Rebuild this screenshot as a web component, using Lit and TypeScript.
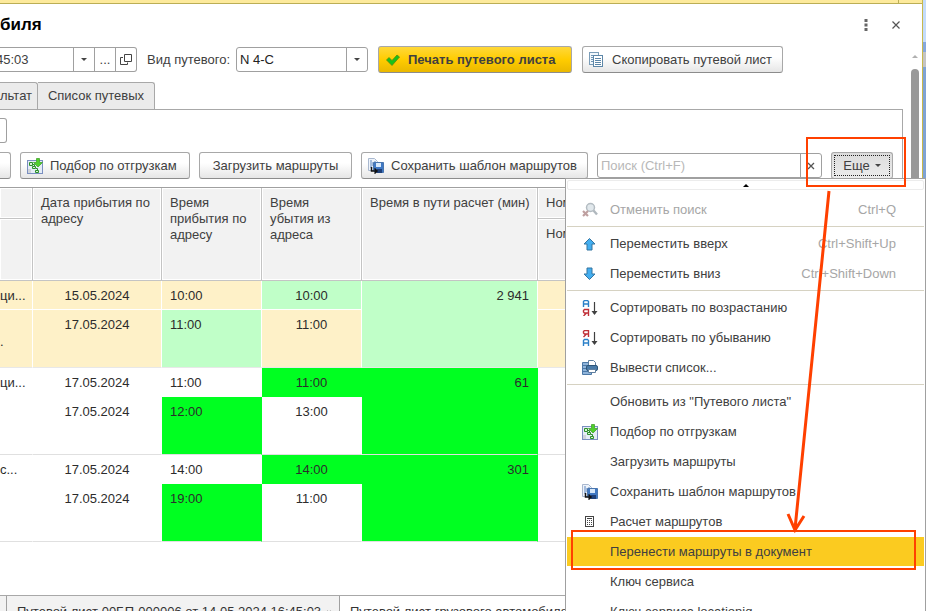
import { LitElement, html, svg, css, nothing, TemplateResult } from "lit";
import { customElement, state } from "lit/decorators.js";
import { classMap } from "lit/directives/class-map.js";

type IconName =
  | "check" | "copy" | "pick" | "save" | "cancel" | "up" | "down"
  | "asc" | "desc" | "print" | "calc" | "open";

const letterA = (y: number) => svg`
  <path d="M1.5 ${y + 7}v-5.5l1-1h3l1 1v5.5M1.5 ${y + 4}h5" fill="none" stroke="#2b80c8" stroke-width="1.4"/>`;
const letterYa = (y: number) => svg`
  <path d="M6.5 ${y + 7}v-6.5h-4l-1 1v1.500l1 1h4M4.500 ${y + 4}l-3 3" fill="none" stroke="#c03038" stroke-width="1.4"/>`;
const sortArrow = svg`
  <path d="M12.500 2v12" stroke="#404040" stroke-width="1.200"/>
  <path d="M9.500 11h6l-3 4z" fill="#404040"/>`;

const icons: Record<IconName, TemplateResult | ReturnType<typeof svg>> = {
  check: svg`<path d="M1.500 8l2.500-2.500 3 3L12 3 14.500 5 7 13.500z" fill="#19c219" stroke="#5b8a12" stroke-width=".8"/>`,
  copy: svg`
    <rect x=".5" y=".5" width="9" height="12" fill="#f2f8fc" stroke="#7b9db8"/>
    <path d="M2 3.500h2M2 5.500h2M2 7.500h2M2 9.500h2" stroke="#6f95b5"/>
    <rect x="4.500" y="3.500" width="9" height="11" fill="#fff" stroke="#5d87a8"/>
    <path d="M6 6.500h6M6 8.500h6M6 10.500h6M6 12.500h6" stroke="#5d87a8"/>`,
  pick: svg`
    <rect x=".5" y="2.500" width="15" height="13" fill="#e4ecf6" stroke="#7a8fc0"/>
    <path d="M1 11h3v4h-3z" fill="#cfd3da"/>
    <path d="M2.500 4.500h3v3h-3zM5.500 8.500h3v2h-3zM8.500 12.500h3v2h-3z" fill="#d9f5d0" stroke="#2b8f2b"/>
    <path d="M6 6.500h1.500v1.500M9 10.500h1.500v1.500" fill="none" stroke="#2b8f2b"/>
    <path d="M9.500.5h3v4h3l-4.500 4.500-4.500-4.500h3z" fill="#4fd02c" stroke="#45a52d" stroke-width=".8"/>`,
  save: svg`
    <path d="M.5.5h6l3 3v9h-9z" fill="#eef3fa" stroke="#a9b8cf"/>
    <path d="M2 3h2M2 5h3M2 7h3M2 9h2M6 4h2" stroke="#5c86c0"/>
    <path d="M5.500 4.500h10v10h-8l-2-2z" fill="#3f78c4" stroke="#4a76ae"/>
    <path d="M8 5h5v4h-5z" fill="#d7e8fa"/>
    <path d="M9 11h5v4h-5z" fill="#1e3f78"/>
    <path d="M3.500 9v4h5M6.500 10.500l2.500 2.500-2.500 2.500" fill="none" stroke="#111" stroke-width="1.500"/>`,
  cancel: svg`
    <circle cx="8.500" cy="5.500" r="4" fill="#e1e8ec" stroke="#b4bcc2" stroke-width="1.500"/>
    <path d="M11.500 8.500l3.500 4" stroke="#b0b8be" stroke-width="2.400"/>
    <path d="M1 9l5 5M6 9l-5 5" stroke="#bfa0a0" stroke-width="2.200"/>`,
  up: svg`<path d="M7.500 2.500l5.500 5.500h-3v6h-5v-6h-3z" fill="#43aef0" stroke="#35749f"/>`,
  down: svg`<path d="M7.500 13.500l5.500-5.500h-3v-6h-5v6h-3z" fill="#43aef0" stroke="#35749f"/>`,
  asc: svg`${letterA(0)}${letterYa(9)}${sortArrow}`,
  desc: svg`${letterYa(0)}${letterA(9)}${sortArrow}`,
  print: svg`
    <path d="M.5 2.500h9v12h-9z" fill="#8fb4da" stroke="#4b78a6"/>
    <path d="M1 5.500h7M1 8.500h7M1 11.500h7" stroke="#4b78a6"/>
    <path d="M6.500.5h5l2 2v4h-7z" fill="#fff" stroke="#5f7f9f"/>
    <rect x="4.500" y="5.500" width="11" height="5" rx="1.500" fill="#4a7ba8" stroke="#2d5578"/>
    <path d="M6.500 9.500h7v3h-7z" fill="#fff" stroke="#5f7f9f"/>`,
  calc: svg`
    <rect x="3.500" y="2.500" width="8" height="10" fill="#fff" stroke="#444"/>
    <path d="M5 4.500h5" stroke="#444"/>
    <path d="M5 6.500h5M5 8.500h5M5 10.500h5" stroke="#444" stroke-dasharray="1 1"/>`,
  open: svg`
    <path d="M6.500 2.500h7v7h-7z" fill="none" stroke="#444"/>
    <path d="M5 5.500h-2.500v7h7v-2" fill="none" stroke="#444"/>`,
};

const icon = (name: IconName) => html`
  <svg class="icon" viewBox="0 0 16 16" aria-hidden="true">${icons[name]}</svg>`;

interface MenuEntry {
  label: string;
  icon?: IconName;
  keys?: string;
  disabled?: boolean;
  selected?: boolean;
}

const menuGroups: MenuEntry[][] = [
  [{ label: "Отменить поиск", icon: "cancel", keys: "Ctrl+Q", disabled: true }],
  [
    { label: "Переместить вверх", icon: "up", keys: "Ctrl+Shift+Up" },
    { label: "Переместить вниз", icon: "down", keys: "Ctrl+Shift+Down" },
  ],
  [
    { label: "Сортировать по возрастанию", icon: "asc" },
    { label: "Сортировать по убыванию", icon: "desc" },
    { label: "Вывести список...", icon: "print" },
  ],
  [
    { label: 'Обновить из "Путевого листа"' },
    { label: "Подбор по отгрузкам", icon: "pick" },
    { label: "Загрузить маршруты" },
    { label: "Сохранить шаблон маршрутов", icon: "save" },
    { label: "Расчет маршрутов", icon: "calc" },
    { label: "Перенести маршруты в документ", selected: true },
    { label: "Ключ сервиса" },
    { label: "Ключ сервиса locationiq" },
  ],
];

interface Route {
  address: string;
  note: string;
  dates: [string, string];
  arrive: [string, string];
  leave: [string, string];
  minutes: string;
  current?: boolean;
}

const routes: Route[] = [
  { address: "ци...", note: ".", dates: ["15.05.2024", "17.05.2024"], arrive: ["10:00", "11:00"], leave: ["10:00", "11:00"], minutes: "2 941", current: true },
  { address: "ци...", note: "", dates: ["17.05.2024", "17.05.2024"], arrive: ["11:00", "12:00"], leave: ["11:00", "13:00"], minutes: "61" },
  { address: "с...", note: "", dates: ["17.05.2024", "17.05.2024"], arrive: ["14:00", "19:00"], leave: ["14:00", "11:00"], minutes: "301" },
];

@customElement("app-menu")
class AppMenu extends LitElement {
  static styles = css`
    :host {
      display: block;
      box-sizing: border-box;
      border: 1px solid #a0a0a0;
      background: #fff;
      padding: 1px;
      color: #404040;
    }
    .scroll {
      display: flex;
      justify-content: center;
      align-items: center;
      width: 100%;
      height: 10px;
      padding: 0;
      margin-bottom: 3px;
      border: 1px solid #ececec;
      border-radius: 2px;
      background: #fff;
    }
    .scroll::before {
      content: "";
      border: 3px solid transparent;
      border-top: 0;
      border-bottom-color: #000;
    }
    hr {
      margin: 1px 0 0;
      border: 0;
      height: 1px;
      background: #d6d2c2;
    }
    .item {
      position: relative;
      display: flex;
      align-items: center;
      width: 100%;
      height: 29px;
      margin: 1px 0 0;
      padding: 0 28px 0 15px;
      border: 0;
      background: none;
      font: inherit;
      color: inherit;
      text-align: left;
      white-space: nowrap;
    }
    .item.selected { background: #fbcb20; }
    .item:disabled { color: #a6a6a6; }
    .slot { width: 28px; flex: none; display: flex; }
    .icon { width: 16px; height: 16px; }
    .label { flex: 1; }
    .keys { color: #a6a6a6; }
    .group { padding: 1px 0; }
    .mark {
      position: absolute;
      inset: -7px 8px -4px 4px;
      border: 2px solid #ff4000;
      pointer-events: none;
    }
  `;

  render() {
    return html`
      <button class="scroll" aria-label="Прокрутить вверх"></button>
      ${menuGroups.map((group, i) => html`
        ${i ? html`<hr />` : nothing}
        <div class="group" role="group">
        ${group.map((m) => html`
          <button
            role="menuitem"
            class=${classMap({ item: true, selected: !!m.selected })}
            ?disabled=${m.disabled}
          >
            <span class="slot">${m.icon ? icon(m.icon) : nothing}</span>
            <span class="label">${m.label}</span>
            ${m.keys ? html`<span class="keys">${m.keys}</span>` : nothing}
            ${m.selected ? html`<span class="mark"></span>` : nothing}
          </button>`)}
        </div>
      `)}
    `;
  }
}

@customElement("app-root")
class AppRoot extends LitElement {
  @state() private menuOpen = true;

  static styles = css`
    :host {
      display: flex;
      height: 100vh;
      overflow: hidden;
      background: #fff;
      font: 13px/16px "Liberation Sans", Arial, sans-serif;
      color: #404040;
    }
    * { box-sizing: border-box; }
    button, input, select { font: inherit; color: inherit; margin: 0; }
    .window { flex: 1; min-width: 0; border-right: 1px solid #c8b84c; }
    .desktop {
      width: 3px;
      background: linear-gradient(#c4dcfa 42px, #86a8dc 42px 52px, #c4c4c4 52px 67px, #7fa3d4 67px);
    }
    .strip { display: flex; justify-content: flex-end; height: 4px; padding-right: 23px; background: #fdea9c; border-bottom: 1px solid #bbae55; }
    .strip::after { content: ""; width: 1px; background: #bbae55; }
    .titlebar { display: flex; align-items: center; height: 42px; padding-right: 11px; }
    h1 { flex: 1; margin: 0; font-size: 17px; line-height: 22px; color: #000; }
    .tool { width: 30px; height: 24px; padding: 0; border: 0; background: none; display: grid; place-items: center; }
    .tool svg { width: 14px; height: 14px; }
    .body { display: flex; }
    .main { flex: 1; min-width: 0; }
    .row { display: flex; align-items: center; }
    .fields { height: 27px; }
    .box { display: flex; height: 25px; border: 1px solid #a0a0a0; border-radius: 3px; background: #fff; }
    .box input { min-width: 0; border: 0; padding: 0; background: none; outline: 0; }
    .box button { width: 21px; padding: 0; border: 0; border-left: 1px solid #a0a0a0; background: none; display: grid; place-items: center; line-height: 14px; }
    .box .icon { width: 16px; height: 16px; }
    .date { width: 141px; margin-left: -4px; border-left: 0; border-radius: 0 3px 3px 0; }
    .date input { flex: 1; }
    .label { margin: 0 6px 0 10px; }
    .combo { position: relative; width: 132px; margin-right: 10px; }
    .combo select { appearance: none; width: 100%; border: 0; padding: 0 24px 0 3px; background: none; color: #222; }
    .combo .drop { position: absolute; inset: 0 0 0 auto; width: 21px; border-left: 1px solid #a0a0a0; display: grid; place-items: center; pointer-events: none; }
    .arrow { border: 3px solid transparent; border-bottom: 0; border-top-color: #444; }
    .btn {
      display: flex;
      align-items: center;
      justify-content: flex-start;
      gap: 7px;
      height: 27px;
      padding: 0 0 0 6px;
      border: 1px solid #a8a8a8;
      border-bottom-color: #8c8c8c;
      border-radius: 3px;
      background: linear-gradient(#fff 40%, #e6e6e6);
      white-space: nowrap;
    }
    .btn .icon { width: 16px; height: 16px; }
    .primary { width: 194px; margin-right: 10px; background: linear-gradient(#ffd83a, #ffcc00 50%, #eab800); font-weight: bold; }
    .copy { width: 201px; }
    .tabs { display: flex; margin-top: 9px; }
    .tab { height: 27px; padding: 0; border: 1px solid #a8a8a8; border-bottom: 0; border-left: 0; border-radius: 0 3px 0 0; background: #ebebeb; white-space: nowrap; }
    .tab.first { width: 38px; text-align: left; }
    .tab.second { width: 117px; }
    .panel { border: 1px solid #a8a8a8; border-left: 0; margin-right: 5px; padding-right: 9px; }
    .stub { width: 7px; margin: 8px 0 9px; border-left: 0; border-radius: 0 3px 3px 0; }
    .toolbar { gap: 9px; height: 27px; }
    .edge { width: 11px; padding: 0; border-left: 0; border-radius: 0 3px 3px 0; }
    .pick { width: 170px; }
    .load { width: 153px; padding: 0; justify-content: center; }
    .save { width: 227px; }
    .search { flex: 1; min-width: 0; }
    .search input { flex: 1; padding-left: 3px; }
    .search input::placeholder { color: #b8b8b8; opacity: 1; }
    .more-wrap { position: relative; }
    .more { width: 62px; padding: 0; justify-content: center; gap: 5px; background: linear-gradient(#dcdcdc, #ececec); outline: 1px dotted #222; outline-offset: -4px; }
    .more-mark { position: absolute; inset: -15px -13px -8px -25px; border: 2px solid #ff4000; pointer-events: none; z-index: 3; }
    app-menu { position: absolute; top: 26px; right: -33px; width: 361px; z-index: 2; }
    .pointer { position: absolute; top: 37px; right: 51px; width: 60px; height: 345px; z-index: 4; pointer-events: none; }
    .grid { min-height: 408px; margin-top: 8px; border-top: 1px solid #a0a0a0; }
    table { width: 100%; table-layout: fixed; border-spacing: 0; }
    th, td { padding: 7px 8px 0; border: 0 solid #c4c4c4; vertical-align: top; text-align: left; font-weight: normal; }
    th { background: #f2f2f2; border-width: 0 1px 1px 0; box-shadow: inset 0 0 0 1px #fff; }
    th.date-head, th.min-head { padding-right: 4px; }
    th.leave-head { padding-right: 16px; }
    .h1row th { height: 31px; }
    .h2row th { height: 62px; }
    .c-addr { width: 33px; }
    .c-date { width: 129px; }
    .c-time { width: 100px; }
    .c-min { width: 176px; }
    td { color: #2c2c2c; border-color: transparent; border-width: 0 1px 1px 0; }
    td.addr { padding-left: 0; }
    .line1 td { height: 29px; }
    .line2 td { height: 58px; }
    .line2 td, td.min { border-bottom-color: #e0e0e0; }
    .line2 .addr { padding-top: 24px; }
    td.center { text-align: center; }
    td.min { text-align: right; }
    .bright { background: #00ff21; }
    .current td { background: #fef1c8; border-right-color: #fff; }
    .current.line1 td { border-bottom-color: #fff; }
    .current.line2 td, .current.line1 td.min { border-bottom-color: #e8e8e8; }
    .current td.bright { background: #c0ffc8; }
    .bar { width: 14px; margin-top: 9px; display: flex; flex-direction: column; align-items: center; gap: 11px; }
    .bar .tip { border: 3px solid transparent; border-top: 0; border-bottom-color: #b0b0b0; }
    .bar .thumb { width: 8px; flex: 1; border-radius: 4px 4px 0 0; background: #999; }
    .docs { display: flex; height: 31px; background: #fff; }
    .doc { display: flex; align-items: center; gap: 6px; padding: 0 8px 0 10px; border: 0; border-right: 1px solid #a0a0a0; background: #f2f2f2; color: #333; white-space: nowrap; }
    .doc.cut { width: 7px; padding: 0; }
    .doc.second { width: 333px; justify-content: space-between; }
    .doc.active { flex: 1; background: #fff; border-right: 0; }
    .doc svg { width: 8px; height: 8px; }
  `;

  private cross = html`
    <svg viewBox="0 0 8 8" width="8" height="8" aria-hidden="true">
      <path d="M1 1l6 6M7 1l-6 6" stroke="#555" stroke-width="1.300" />
    </svg>`;

  private routeRows(r: Route) {
    return [0, 1].map((i) => html`
      <tr class=${classMap({ current: !!r.current, line1: i === 0, line2: i === 1 })}>
        <td class="addr">${i ? r.note : r.address}</td>
        <td class="center">${r.dates[i]}</td>
        <td class=${classMap({ bright: i === 1 })}>${r.arrive[i]}</td>
        <td class=${classMap({ center: true, bright: i === 0 })}>${r.leave[i]}</td>
        ${i === 0 ? html`<td class="min bright" rowspan="2">${r.minutes}</td>` : nothing}
        <td></td>
      </tr>`);
  }

  render() {
    return html`
      <div class="window">
        <div class="strip"></div>
        <header class="titlebar">
          <h1>биля</h1>
          <button class="tool" aria-label="Меню">
            <svg viewBox="0 0 14 14"><path d="M5.500 1h3v3h-3zM5.500 5.500h3v3h-3zM5.500 10h3v3h-3z" fill="#666" /></svg>
          </button>
          <button class="tool" aria-label="Закрыть">
            <svg viewBox="0 0 14 14"><path d="M3.500 3.500l7 7M10.500 3.500l-7 7" stroke="#555" stroke-width="1.200" /></svg>
          </button>
        </header>
        <div class="body">
          <main class="main">
            <div class="row fields">
              <div class="box date">
                <input aria-label="Дата" value="45:03" />
                <button aria-label="Выбрать"><span class="arrow"></span></button>
                <button aria-label="Список">...</button>
                <button aria-label="Открыть">${icon("open")}</button>
              </div>
              <label class="label" for="kind">Вид путевого:</label>
              <div class="box combo">
                <select id="kind"><option>N 4-C</option></select>
                <span class="drop"><span class="arrow"></span></span>
              </div>
              <button class="btn primary">${icon("check")}Печать путевого листа</button>
              <button class="btn copy">${icon("copy")}Скопировать путевой лист</button>
            </div>
            <nav class="tabs">
              <button class="tab first">льтат</button>
              <button class="tab second">Список путевых</button>
            </nav>
            <section class="panel">
              <div class="box stub"></div>
              <div class="row toolbar">
                <div class="btn edge"></div>
                <button class="btn pick">${icon("pick")}Подбор по отгрузкам</button>
                <button class="btn load">Загрузить маршруты</button>
                <button class="btn save">${icon("save")}Сохранить шаблон маршрутов</button>
                <div class="box search">
                  <input aria-label="Поиск" placeholder="Поиск (Ctrl+F)" />
                  <button aria-label="Очистить">${this.cross}</button>
                </div>
                <div class="more-wrap">
                  <button class="btn more" @click=${() => (this.menuOpen = !this.menuOpen)}>
                    Еще<span class="arrow"></span>
                  </button>
                  <span class="more-mark"></span>
                  ${this.menuOpen ? html`
                    <app-menu role="menu"></app-menu>
                    <svg class="pointer" viewBox="0 0 60 345" aria-hidden="true">
                      <path d="M47 2L13 340M6 325l7 16 9-14" fill="none" stroke="#ff4000" stroke-width="3" />
                    </svg>` : nothing}
                </div>
              </div>
              <div class="grid">
                <table>
                  <colgroup>
                    <col class="c-addr" /><col class="c-date" /><col class="c-time" />
                    <col class="c-time" /><col class="c-min" /><col />
                  </colgroup>
                  <thead>
                    <tr class="h1row">
                      <th></th>
                      <th class="date-head" rowspan="2">Дата прибытия по адресу</th>
                      <th rowspan="2">Время прибытия по адресу</th>
                      <th class="leave-head" rowspan="2">Время убытия из адреса</th>
                      <th class="min-head" rowspan="2">Время в пути расчет (мин)</th>
                      <th>Номер</th>
                    </tr>
                    <tr class="h2row"><th></th><th>Номер</th></tr>
                  </thead>
                  <tbody>${routes.map((r) => this.routeRows(r))}</tbody>
                </table>
              </div>
            </section>
          </main>
          <div class="bar"><span class="tip"></span><span class="thumb"></span></div>
        </div>
        <footer class="docs">
          <button class="doc cut" aria-label="Предыдущий документ"></button>
          <button class="doc second">Путевой лист 00БП-000006 от 14.05.2024 16:45:03 ${this.cross}</button>
          <button class="doc active">Путевой лист грузового автомобиля</button>
        </footer>
      </div>
      <div class="desktop"></div>
    `;
  }
}
